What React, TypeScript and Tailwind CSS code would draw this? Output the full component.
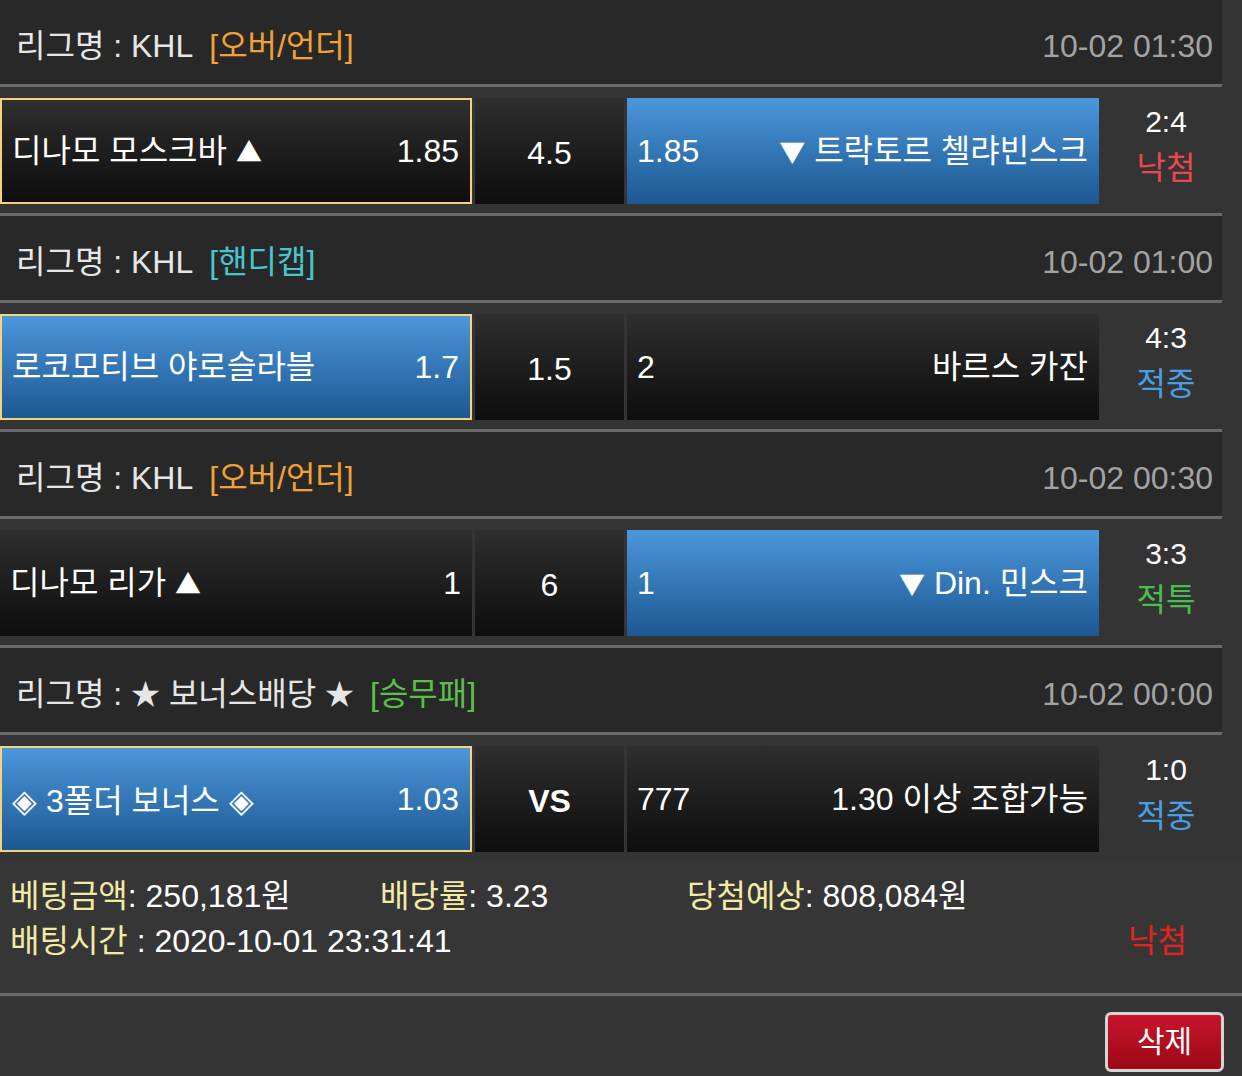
import React from "react";

type Game = {
  league: string;
  tag: string;
  tagColor: string;
  date: string;
  home: string;
  homeOdds: string;
  mid: string;
  awayOdds: string;
  away: string;
  pick: boolean;
  win: "home" | "away";
  score: string;
  result: string;
  resultColor: string;
};

const games: Game[] = [
  {
    league: "KHL",
    tag: "[오버/언더]",
    tagColor: "text-[#f0a236]",
    date: "10-02 01:30",
    home: "디나모 모스크바 ▲",
    homeOdds: "1.85",
    mid: "4.5",
    awayOdds: "1.85",
    away: "▼ 트락토르 첼랴빈스크",
    pick: true,
    win: "away",
    score: "2:4",
    result: "낙첨",
    resultColor: "text-[#e8484e]",
  },
  {
    league: "KHL",
    tag: "[핸디캡]",
    tagColor: "text-[#46c7d0]",
    date: "10-02 01:00",
    home: "로코모티브 야로슬라블",
    homeOdds: "1.7",
    mid: "1.5",
    awayOdds: "2",
    away: "바르스 카잔",
    pick: true,
    win: "home",
    score: "4:3",
    result: "적중",
    resultColor: "text-[#4a9fe0]",
  },
  {
    league: "KHL",
    tag: "[오버/언더]",
    tagColor: "text-[#f0a236]",
    date: "10-02 00:30",
    home: "디나모 리가 ▲",
    homeOdds: "1",
    mid: "6",
    awayOdds: "1",
    away: "▼ Din. 민스크",
    pick: false,
    win: "away",
    score: "3:3",
    result: "적특",
    resultColor: "text-[#4cbd4e]",
  },
  {
    league: "★ 보너스배당 ★",
    tag: "[승무패]",
    tagColor: "text-[#5cbf4c]",
    date: "10-02 00:00",
    home: "◈ 3폴더 보너스 ◈",
    homeOdds: "1.03",
    mid: "VS",
    awayOdds: "777",
    away: "1.30 이상 조합가능",
    pick: true,
    win: "home",
    score: "1:0",
    result: "적중",
    resultColor: "text-[#4a9fe0]",
  },
];

// symbols are drawn from the CJK font so they come out as big as in the original
function T({ s }: { s: string }) {
  return (
    <>
      {s.split(/([▲▼◈★])/).map((p, i) => {
        if (p === "▲" || p === "▼")
          return (
            <span key={i} className="font-['Noto_Sans_CJK_KR',sans-serif] text-[26px]">
              {p}
            </span>
          );
        if (p === "★")
          return (
            <span key={i} className="text-[29px]">
              {p}
            </span>
          );
        if (p === "◈")
          return (
            <span key={i} className="font-['Noto_Sans_CJK_KR',sans-serif]">
              {p}
            </span>
          );
        return <React.Fragment key={i}>{p}</React.Fragment>;
      })}
    </>
  );
}

const blue = "bg-gradient-to-b from-[#4c97db] to-[#1c5892]";
const black = "bg-gradient-to-b from-[#2f2f2f] to-[#0e0e0e]";

function Line({ full }: { full?: boolean }) {
  return <div className={full ? "h-[3px] w-full bg-[#6a6a6a]" : "h-[3px] w-[1222px] bg-[#6a6a6a]"} />;
}

function GameBlock({ g, last }: { g: Game; last: boolean }) {
  return (
    <div>
      <div className="flex h-[84px] w-[1222px] items-center justify-between bg-[#282828] pl-4 pr-[9px] pt-[7px]">
        <div className="text-[#e6e6e6]">
          <T s={`리그명 : ${g.league}`} />
          <span className={`ml-4 ${g.tagColor}`}>{g.tag}</span>
        </div>
        <div className="text-[#a3a3a3]">{g.date}</div>
      </div>
      <Line />
      <div className="flex h-[126px] w-[1222px] pt-[11px]">
        <div
          className={`flex h-[106px] w-[472px] items-center justify-between pl-[10px] pr-[11px] text-white ${
            g.win === "home" ? blue : black
          } ${g.pick ? "border-2 border-[#f6d27c]" : ""}`}
        >
          <span>
            <T s={g.home} />
          </span>
          <span>{g.homeOdds}</span>
        </div>
        <div
          className={`ml-[3px] flex h-[106px] w-[149px] items-center justify-center pt-1 text-white ${black} ${
            g.mid === "VS" ? "font-bold" : ""
          }`}
        >
          {g.mid}
        </div>
        <div
          className={`ml-[3px] flex h-[106px] w-[472px] items-center justify-between pl-[10px] pr-[11px] text-white ${
            g.win === "away" ? blue : black
          }`}
        >
          <span>{g.awayOdds}</span>
          <span>
            <T s={g.away} />
          </span>
        </div>
        <div className="flex flex-1 flex-col items-center pl-[11px] leading-[47px]">
          <span className="text-[30px] text-white">{g.score}</span>
          <span className={g.resultColor}>{g.result}</span>
        </div>
      </div>
      {!last && <Line />}
    </div>
  );
}

export default function App() {
  return (
    <div className="min-h-[1076px] w-[1242px] bg-[#343434] font-['Liberation_Sans','Noto_Sans_CJK_KR',sans-serif] text-[32px] leading-none">
      {games.map((g, i) => (
        <GameBlock key={i} g={g} last={i === games.length - 1} />
      ))}

      <div className="h-[132px] bg-[#363636] pl-[10px] pt-[13px] text-[32px] leading-[45px] text-white">
        <div className="flex">
          <div className="w-[370px]">
            <span className="text-[#f2eaa6]">베팅금액</span>: 250,181원
          </div>
          <div className="w-[307px]">
            <span className="text-[#f2eaa6]">배당률</span>: 3.23
          </div>
          <div>
            <span className="text-[#f2eaa6]">당첨예상</span>: 808,084원
          </div>
        </div>
        <div className="flex justify-between pr-[55px]">
          <div>
            <span className="text-[#f2eaa6]">배팅시간</span> : 2020-10-01 23:31:41
          </div>
          <span className="text-[#e3231f]">낙첨</span>
        </div>
      </div>
      <Line full />
      <div className="flex justify-end pr-[18px] pt-4">
        <button className="flex h-[60px] w-[119px] items-center justify-center rounded-md border-[3px] border-[#d4d4d4] bg-gradient-to-b from-[#c8142c] to-[#9c0816] text-[30px] text-white">
          삭제
        </button>
      </div>
    </div>
  );
}
